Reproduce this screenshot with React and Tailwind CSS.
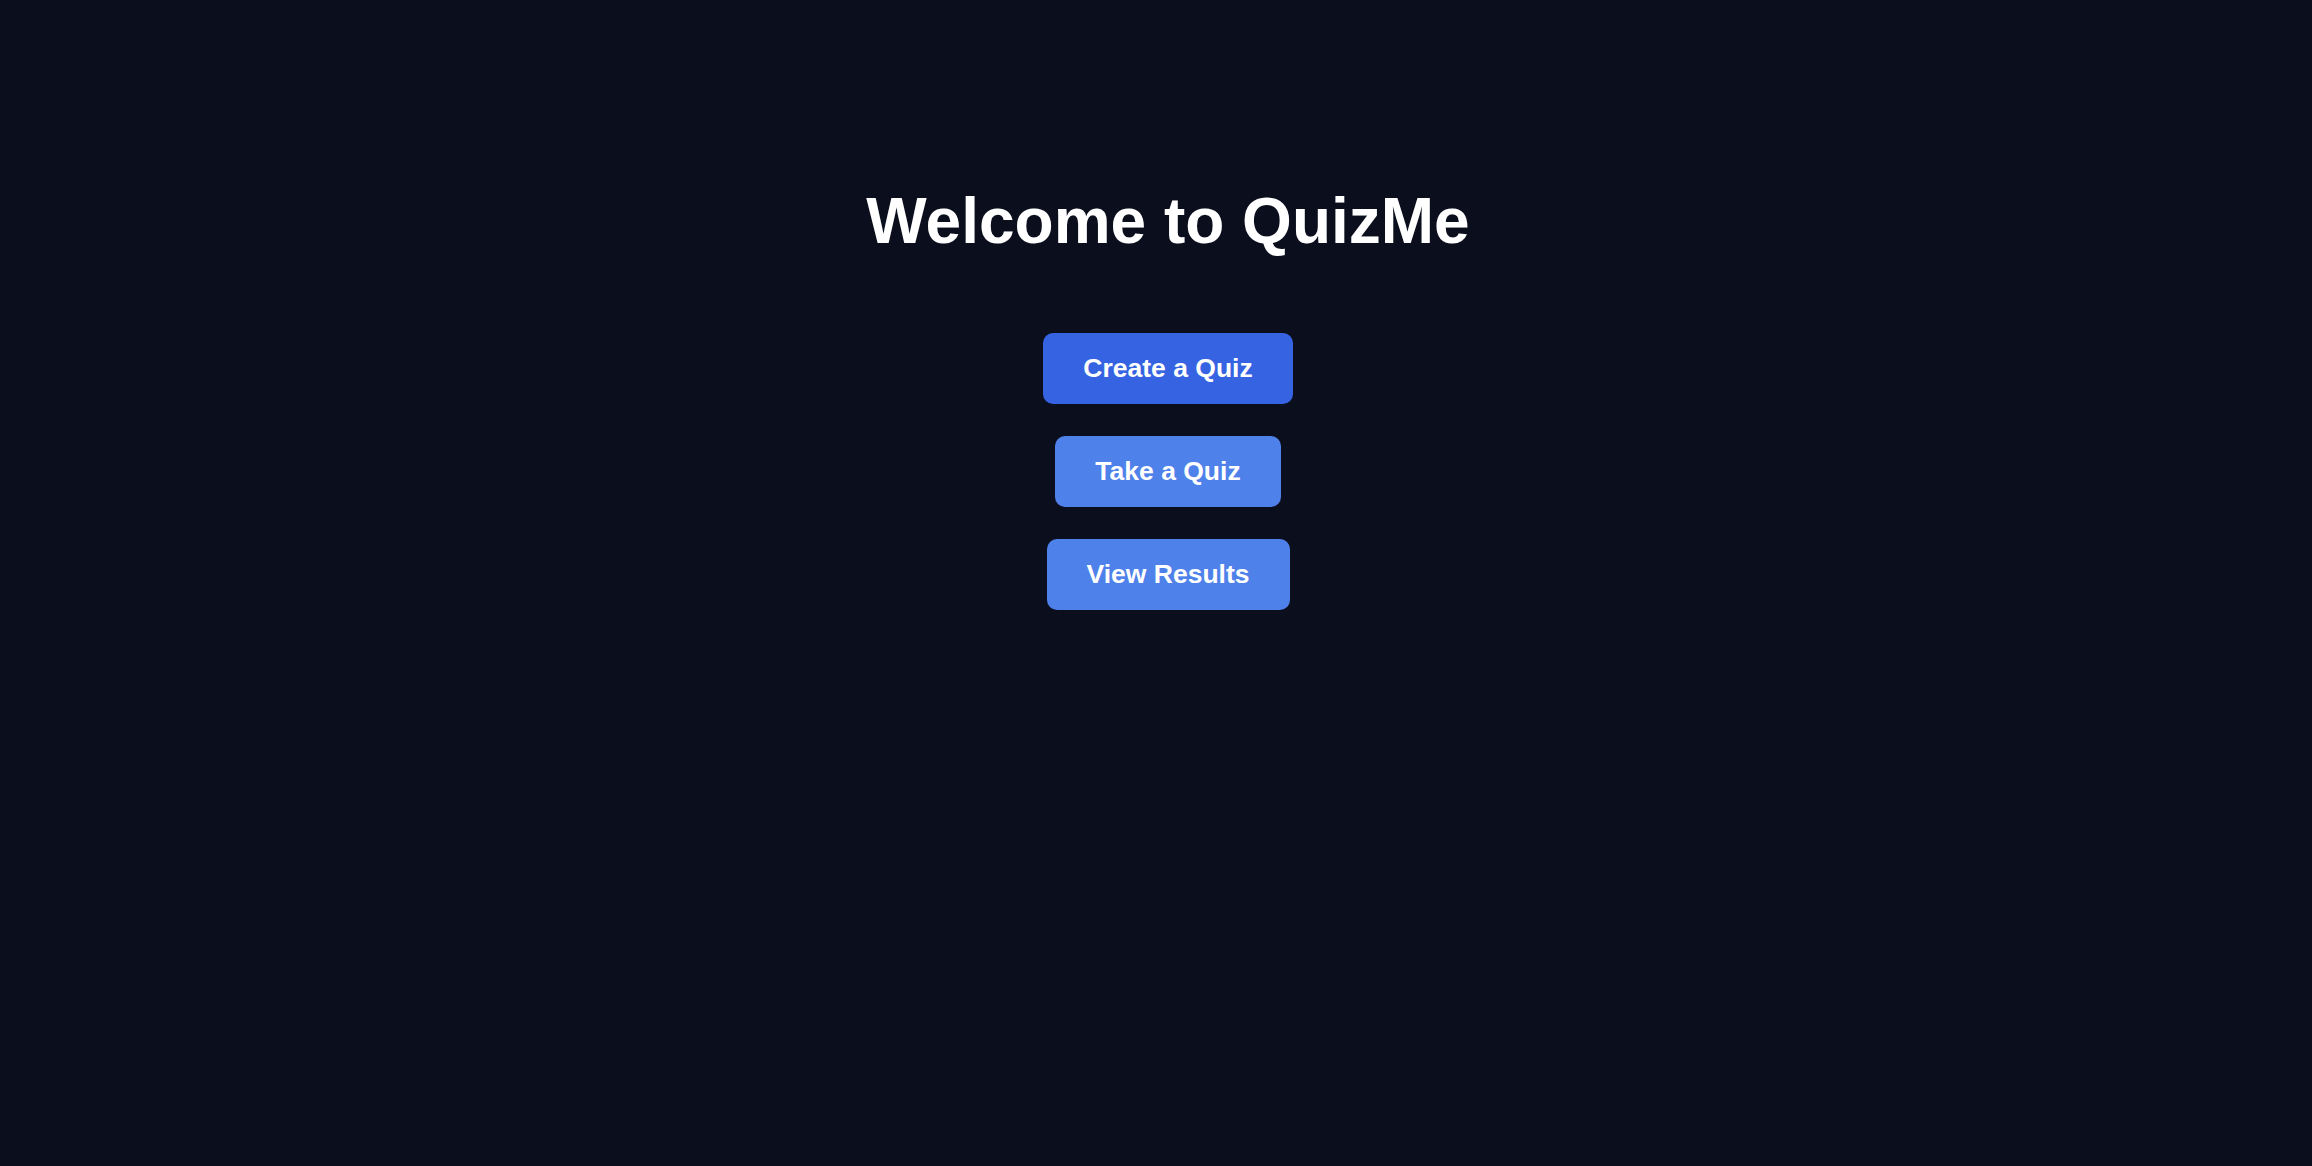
const buttons = [
  { label: 'Create a Quiz', primary: true },
  { label: 'Take a Quiz' },
  { label: 'View Results' },
];

const App = () => {
  return (
    <div
      className="min-h-screen bg-[#0b0f1d] pl-[24px] pt-[189px] flex flex-col items-center text-white"
      style={{ fontFamily: '"Liberation Sans", Arial, sans-serif' }}
    >
      <h1 className="text-[64px] leading-none font-bold">Welcome to QuizMe</h1>

      <div className="mt-[80px] flex flex-col items-center gap-[32px]">
        {buttons.map((b) => (
          <button
            key={b.label}
            className={
              b.primary
                ? 'h-[71px] rounded-[10px] bg-[#3563e2] px-[40px] text-[26.5px] font-bold text-white'
                : 'h-[71px] rounded-[10px] bg-[#4f81ea] px-[40px] text-[26.5px] font-bold text-white'
            }
          >
            {b.label}
          </button>
        ))}
      </div>
    </div>
  );
};

export default App;
